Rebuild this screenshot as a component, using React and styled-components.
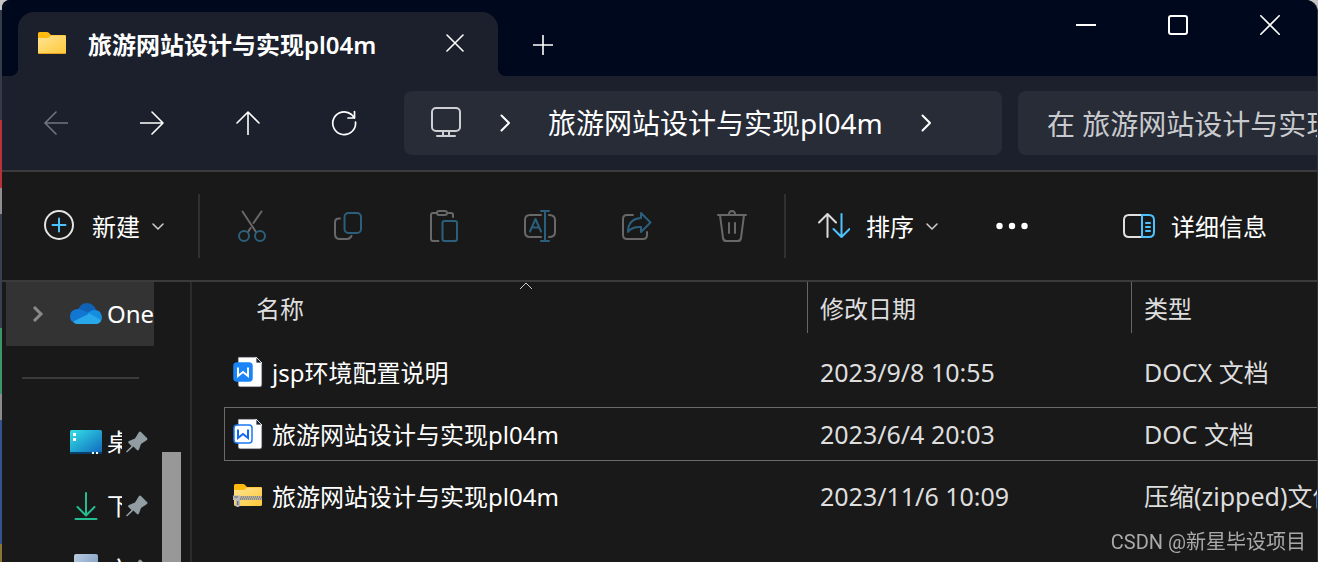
import styled, { createGlobalStyle } from "styled-components";

const GlobalStyle = createGlobalStyle`
  * {
    box-sizing: border-box;
  }

  body {
    margin: 0;
    overflow: hidden;
    background: #191919;
    font-family: "Noto Sans", "Noto Sans CJK SC", sans-serif;
    color: #fff;
  }

  button {
    font: inherit;
    color: inherit;
    background: none;
    border: none;
    padding: 0;
    margin: 0;
  }
`;

const PROJECT = "旅游网站设计与实现pl04m";

const files = [
  { name: "jsp环境配置说明", date: "2023/9/8 10:55", type: "DOCX 文档", icon: "docx" },
  { name: PROJECT, date: "2023/6/4 20:03", type: "DOC 文档", icon: "doc", focused: true },
  { name: PROJECT, date: "2023/11/6 10:09", type: "压缩(zipped)文件夹", icon: "zip" },
];

/* ---------- icons ---------- */

function Icon({ size = 32, color = "#fff", width = 2, children }) {
  return (
    <svg
      width={size}
      height={size}
      viewBox={`0 0 ${size} ${size}`}
      fill="none"
      stroke={color}
      strokeWidth={width}
      strokeLinecap="round"
      strokeLinejoin="round"
      aria-hidden="true"
    >
      {children}
    </svg>
  );
}

const GRAY = "#686868";
const BLUE = "#2b5f7c";
const ACCENT = "#4cc2ff";

const BackIcon = () => (
  <Icon size={24} color="#70747c" width={1.6}>
    <path d="M23.5 12H1M12 1 1 12l11 11" />
  </Icon>
);

const ForwardIcon = () => (
  <Icon size={24} width={1.6}>
    <path d="M.5 12H23M12 1l11 11-11 11" />
  </Icon>
);

const UpIcon = () => (
  <Icon size={24} width={1.6}>
    <path d="M12 23.5V1M1 12 12 1l11 11" />
  </Icon>
);

const RefreshIcon = () => (
  <Icon size={26} width={1.7}>
    <path d="M24.5 12A11.4 11.4 0 1 1 20.5 4.5L23.5 8M23.5 1.5V8H17" />
  </Icon>
);

const MonitorIcon = () => (
  <Icon size={32} color="#cdcfd2">
    <rect x="2" y="1" width="28" height="23" rx="4" />
    <path d="M13 24v4M19 24v4M7 29h18" />
  </Icon>
);

const CrumbChevron = () => (
  <Icon size={18}>
    <path d="M5.5 1.5 13 9l-7.5 7.5" />
  </Icon>
);

const SmallChevron = () => (
  <Icon size={12} color="#d0d0d0" width={1.5}>
    <path d="M1 4l5 5 5-5" />
  </Icon>
);

const FolderIcon = () => (
  <svg width="28" height="22" viewBox="0 0 28 22" aria-hidden="true">
    <defs>
      <linearGradient id="folder" x1="0" y1="0" x2="1" y2="1">
        <stop offset="0" stopColor="#ffe394" />
        <stop offset="1" stopColor="#ffc938" />
      </linearGradient>
    </defs>
    <path d="M0 1.5Q0 0 1.5 0H9q1 0 1.8.8L13 3h13.5Q28 3 28 4.5V12H0z" fill="#ffb90f" />
    <path d="M0 6h9.5q1 0 1.8-.8L13 3.500h15V20.5q0 1.500-1.500 1.500h-25Q0 22 0 20.5z" fill="url(#folder)" />
    <path d="M.5 21.5h27" stroke="#e5a21a" strokeWidth="1" />
  </svg>
);

const ZipIcon = () => (
  <svg width="30" height="24" viewBox="0 0 30 24" aria-hidden="true">
    <path d="M1 1.5Q1 0 2.5 0H10q1 0 1.8.8L14 3h13.5Q29 3 29 4.5V12H1z" fill="#ffb90f" />
    <path d="M1 6h9.5q1 0 1.8-.8L14 3.500h15V20.5q0 1.500-1.500 1.500h-25Q1 22 1 20.5z" fill="url(#folder)" />
    <path d="M7 14h22" stroke="#8a8272" strokeWidth="4" />
    <path d="M7 13h22M8 15h21" stroke="#e0ddd4" strokeWidth="1.2" strokeDasharray="1.2 .8" />
    <path d="M0 11.5h7V22q-2.500 2-4.500 0v-6H0z" fill="#b9b9b9" />
    <path d="M4.7 17v4M1 13h4" stroke="#686868" strokeWidth="1.2" />
  </svg>
);

const NewIcon = () => (
  <Icon color="#e4e4e4">
    <circle cx="15" cy="15" r="14" />
    <path d="M15 8.5v13M8.5 15h13" stroke={ACCENT} />
  </Icon>
);

const CutIcon = () => (
  <Icon color={GRAY}>
    <path d="M6.5 1.5 20 22M25.5 1.5 17.5 13M14.5 18 12 22" />
    <circle cx="8" cy="26" r="5" stroke={BLUE} />
    <circle cx="24" cy="26" r="5" stroke={BLUE} />
  </Icon>
);

const CopyIcon = () => (
  <Icon color={GRAY}>
    <path d="M8 8.500h-1Q3 8.500 3 12.500V24q0 5 5 5h7q3 0 4.500-3" />
    <rect x="12.5" y="3" width="16.5" height="20" rx="4" stroke={BLUE} />
  </Icon>
);

const PasteIcon = () => (
  <Icon color={GRAY}>
    <path d="M10.5 31H5q-2 0-2-2V5q0-2 2-2h4M19 3h4q2 0 2 2v2" />
    <rect x="9" y="1" width="10" height="4" rx="2" />
    <rect x="14.5" y="11" width="14.5" height="20" rx="2" stroke={BLUE} />
  </Icon>
);

const RenameIcon = () => (
  <Icon color={GRAY}>
    <path d="M17 5H6Q1 5 1 10v12q0 5 5 5h11M25 5q6 0 6 5v12q0 5-6 5" />
    <path d="M6 21.5 11.5 9 17 21.5M8 17.5h7M21 1v30M17 1h8M17 31h8" stroke={BLUE} />
  </Icon>
);

const ShareIcon = () => (
  <Icon color={GRAY}>
    <path d="M13 5H7Q3 5 3 9V25q0 4 4 4h16q4 0 4-4v-3" />
    <path d="M21 3l9.5 9.500L21 22v-5q-9-.5-13 5Q8 9 21 8z" stroke={BLUE} />
  </Icon>
);

const DeleteIcon = () => (
  <Icon color={GRAY}>
    <path d="M2 5h28M4 5l3 23q.4 3 3.400 3h11.200q3 0 3.400-3L28 5M12.5 4.500q1-3.500 3.500-3.500t3.500 3.500M13 13v10M19 13v10" />
  </Icon>
);

const SortIcon = () => (
  <Icon color="#dcdcdc">
    <path d="M9.5 27V4M1 12.500 9.5 4l8.5 8.500" />
    <path d="M23.500 4v23M15.500 19l8 8 8-8" stroke={ACCENT} />
  </Icon>
);

const MoreIcon = () => (
  <svg width="32" height="32" viewBox="0 0 32 32" fill="#fff" aria-hidden="true">
    <circle cx="3.5" cy="16" r="3.2" />
    <circle cx="16" cy="16" r="3.2" />
    <circle cx="28.5" cy="16" r="3.2" />
  </svg>
);

const DetailsIcon = () => (
  <Icon color="#e0e0e0">
    <path d="M18 5H6Q1 5 1 10v12q0 5 5 5h12" />
    <path d="M19 5h7q5 0 5 5v12q0 5-5 5h-7zM23 13h4M23 17h4M23 21h4" stroke={ACCENT} />
  </Icon>
);

const OneDriveIcon = () => (
  <svg width="32" height="22" viewBox="0 0 32 22" aria-hidden="true">
    <path d="M7 9Q10 0 17 0q6 0 9.500 7L18 13z" fill="#0f62b5" />
    <path d="M7 20Q0 20 0 13.500 0 6.500 7.500 6q3 0 6 1.500L23 13 9 20z" fill="#1277d3" />
    <path d="M17 10 23 7q8-1 9 7 0 6-6 7z" fill="#168ee0" />
    <path d="M3 18.500 19.500 10.500 31 17q-1 4-5.500 4H7q-2.500 0-4-2.500z" fill="#28a8ea" />
  </svg>
);

const DesktopIcon = () => (
  <svg width="32" height="24" viewBox="0 0 32 24" aria-hidden="true">
    <defs>
      <linearGradient id="desktop" x1="0" y1="0" x2="1" y2="1">
        <stop offset="0" stopColor="#35e0e6" />
        <stop offset="1" stopColor="#0f66bd" />
      </linearGradient>
    </defs>
    <rect width="32" height="24" rx="1.5" fill="url(#desktop)" />
    <path d="M0 22h32v.5q0 1.500-1.500 1.500h-29Q0 24 0 22.500z" fill="#0b3f6b" />
    <path d="M3 3h3v3H3zM3 8h3v3H3zM22 22h2v2h-2zM26 22h2v2h-2z" fill="#fff" />
  </svg>
);

const DownloadIcon = () => (
  <Icon color="#24bd92">
    <path d="M16 3v22M7.500 17l8.500 8.500 8.500-8.500M5.500 29h21" />
  </Icon>
);

const DocumentIcon = () => (
  <svg width="32" height="32" viewBox="0 0 32 32" aria-hidden="true">
    <defs>
      <linearGradient id="document" x1="0" y1="0" x2="1" y2="1">
        <stop offset="0" stopColor="#b9cbe0" />
        <stop offset="1" stopColor="#6f8fb8" />
      </linearGradient>
    </defs>
    <rect x="4" width="24" height="32" rx="2" fill="url(#document)" />
  </svg>
);

const PinIcon = () => (
  <svg width="22" height="22" viewBox="0 0 22 22" fill="#929da3" aria-hidden="true">
    <path d="M13 1q1-1 2 0l6 6q1 1 0 2l-6 4-2 5.500q-1 1.500-2 .5l-3.500-3.500L1 21.500l-1-1L5.500 15 2.500 12q-1-1 .5-2L9 7.500z" />
  </svg>
);

const WpsIcon = ({ outlined }) => (
  <svg width="30" height="32" viewBox="0 0 30 32" fill="none" aria-hidden="true">
    <path d="M5 1h18l6 6v22q0 2-2 2H7q-2 0-2-2z" fill="#fff" stroke="#2b3140" strokeWidth=".8" />
    <path d="M23 1v6h6z" fill="#1a2233" stroke="#fff" strokeWidth=".8" />
    <rect
      x="1"
      y="7"
      width="18"
      height="18"
      rx="3"
      fill={outlined ? "#fff" : "#1a84f8"}
      stroke={outlined ? "#1b78f2" : "#1a84f8"}
      strokeWidth="1.5"
    />
    <path d="M5 11.500v8.500l5-4 5 4v-8.500" stroke={outlined ? "#1368f0" : "#fff"} strokeWidth="2" />
  </svg>
);

const fileIcons = {
  docx: <WpsIcon />,
  doc: <WpsIcon outlined />,
  zip: <ZipIcon />,
};

/* ---------- page ---------- */

function TitleBar() {
  return (
    <TitleRow>
      <Tab>
        <FolderIcon />
        <TabTitle>{PROJECT}</TabTitle>
        <TabButton aria-label="关闭标签页">
          <Icon size={18} width={1.6}>
            <path d="M1 1l16 16M17 1 1 17" />
          </Icon>
        </TabButton>
      </Tab>
      <NewTabButton aria-label="新标签页">
        <Icon size={20} width={1.6}>
          <path d="M10 .5v19M.5 10h19" />
        </Icon>
      </NewTabButton>
      <WindowButtons>
        <WindowButton aria-label="最小化">
          <Icon size={20}>
            <path d="M0 10h20" />
          </Icon>
        </WindowButton>
        <WindowButton aria-label="最大化">
          <Icon size={20}>
            <rect x="1" y="1" width="18" height="18" rx="2" />
          </Icon>
        </WindowButton>
        <WindowButton aria-label="关闭">
          <Icon size={20} width={1.6}>
            <path d="M.8.8l18.400 18.400M19.200.8.8 19.200" />
          </Icon>
        </WindowButton>
      </WindowButtons>
    </TitleRow>
  );
}

function NavBar() {
  return (
    <NavRow>
      <NavButtons>
        <IconButton aria-label="后退" disabled>
          <BackIcon />
        </IconButton>
        <IconButton aria-label="前进">
          <ForwardIcon />
        </IconButton>
        <IconButton aria-label="向上">
          <UpIcon />
        </IconButton>
        <IconButton aria-label="刷新">
          <RefreshIcon />
        </IconButton>
      </NavButtons>
      <AddressBar>
        <MonitorIcon />
        <CrumbChevron />
        <Crumb>{PROJECT}</Crumb>
        <CrumbChevron />
      </AddressBar>
      <SearchBox type="text" aria-label="搜索" placeholder={`在 ${PROJECT} 中搜索`} />
    </NavRow>
  );
}

function Toolbar() {
  return (
    <ToolRow>
      <ToolButton>
        <NewIcon />
        <ToolLabel>新建</ToolLabel>
        <Chevron>
          <SmallChevron />
        </Chevron>
      </ToolButton>
      <ToolDivider />
      <IconButton aria-label="剪切" disabled>
        <CutIcon />
      </IconButton>
      <IconButton aria-label="复制" disabled>
        <CopyIcon />
      </IconButton>
      <IconButton aria-label="粘贴" disabled>
        <PasteIcon />
      </IconButton>
      <IconButton aria-label="重命名" disabled>
        <RenameIcon />
      </IconButton>
      <IconButton aria-label="共享" disabled>
        <ShareIcon />
      </IconButton>
      <IconButton aria-label="删除" disabled>
        <DeleteIcon />
      </IconButton>
      <ToolDivider />
      <ToolButton>
        <SortIcon />
        <ToolLabel>排序</ToolLabel>
        <Chevron>
          <SmallChevron />
        </Chevron>
      </ToolButton>
      <MoreButton aria-label="更多">
        <MoreIcon />
      </MoreButton>
      <ToolButton $end>
        <DetailsIcon />
        <ToolLabel>详细信息</ToolLabel>
      </ToolButton>
    </ToolRow>
  );
}

function Sidebar() {
  return (
    <SidePanel>
      <SideList>
        <SideItem $active>
          <Expander>
            <Icon size={16} color="#8a8a8a" width={3}>
              <path d="M4 1 11 8l-7 7" strokeLinecap="butt" strokeLinejoin="miter" />
            </Icon>
          </Expander>
          <OneDriveIcon />
          <SideLabel>OneDrive</SideLabel>
        </SideItem>
        <SideDivider />
        <SideItem>
          <Expander />
          <DesktopIcon />
          <SideLabel>桌面</SideLabel>
          <PinIcon />
        </SideItem>
        <SideItem>
          <Expander />
          <DownloadIcon />
          <SideLabel>下载</SideLabel>
          <PinIcon />
        </SideItem>
        <SideItem>
          <Expander />
          <DocumentIcon />
          <SideLabel>文档</SideLabel>
          <PinIcon />
        </SideItem>
      </SideList>
      <ScrollThumb />
    </SidePanel>
  );
}

function FileList() {
  return (
    <Table>
      <Head>
        <HeadRow>
          <HeadCell>
            名称
            <SortMark>
              <svg width="14" height="8" viewBox="0 0 14 8" fill="none" stroke="#cfcfcf" aria-hidden="true">
                <path d="M1 7l6-6 6 6" />
              </svg>
            </SortMark>
          </HeadCell>
          <HeadCell>修改日期</HeadCell>
          <HeadCell>类型</HeadCell>
        </HeadRow>
      </Head>
      <Body>
        {files.map((file) => (
          <FileRow key={file.date} $focused={file.focused}>
            <NameCell>
              {fileIcons[file.icon]}
              <FileName>{file.name}</FileName>
            </NameCell>
            <InfoCell>{file.date}</InfoCell>
            <InfoCell>{file.type}</InfoCell>
          </FileRow>
        ))}
      </Body>
    </Table>
  );
}

export default function App() {
  return (
    <Desktop>
      <GlobalStyle />
      <Window>
        <TitleBar />
        <NavBar />
        <Toolbar />
        <Content>
          <Sidebar />
          <FileList />
        </Content>
      </Window>
      <Watermark>CSDN @新星毕设项目</Watermark>
    </Desktop>
  );
}

const Desktop = styled.div`
  height: 100vh;
  padding-left: 2px;
  background: linear-gradient(
    #c4c4c4 0 10px,
    #343a48 10px 120px,
    #b8323c 120px 188px,
    #8d8d92 188px 214px,
    #37404f 214px 328px,
    #3f9468 328px 394px,
    #8b8b8b 394px 420px,
    #34538f 420px 544px,
    #8a7434 544px
  );
`;

const Window = styled.div`
  display: flex;
  flex-direction: column;
  height: 100%;
  overflow: hidden;
  background: #191919;
  border-right: 1px solid #30333c;
  border-radius: 8px 12px 0 0;
`;

const TitleRow = styled.header`
  display: flex;
  align-items: flex-start;
  flex: none;
  height: 76px;
  padding: 0 1px 0 16px;
  background: #00081d;
`;

const Tab = styled.div`
  position: relative;
  display: flex;
  align-items: center;
  width: 480px;
  height: 64px;
  margin-top: 12px;
  padding: 0 31px 2px 20px;
  background: #1b202c;
  border-radius: 16px 16px 0 0;

  &::before,
  &::after {
    content: "";
    position: absolute;
    bottom: 0;
    width: 8px;
    height: 8px;
  }

  &::before {
    right: 100%;
    background: radial-gradient(circle at 0 0, transparent 8px, #1b202c 8px);
  }

  &::after {
    left: 100%;
    background: radial-gradient(circle at 100% 0, transparent 8px, #1b202c 8px);
  }
`;

const TabTitle = styled.span`
  flex: 1;
  margin-left: 22px;
  padding-top: 4px;
  font-size: 24px;
  font-weight: 600;
  line-height: 32px;
  white-space: nowrap;
`;

const TabButton = styled.button`
  display: flex;
  align-items: center;
  justify-content: center;
  width: 24px;
  height: 32px;
`;

const NewTabButton = styled(TabButton)`
  width: 90px;
  height: 64px;
  margin-top: 13px;
`;

const WindowButtons = styled.div`
  display: flex;
  margin-left: auto;
`;

const WindowButton = styled.button`
  display: flex;
  align-items: center;
  justify-content: center;
  width: 92px;
  height: 50px;
`;

const NavRow = styled.nav`
  display: flex;
  align-items: center;
  flex: none;
  height: 94px;
  padding-left: 6px;
  background: #1b202c;
`;

const NavButtons = styled.div`
  display: flex;
  margin-right: 12px;
`;

const IconButton = styled.button`
  display: flex;
  align-items: center;
  justify-content: center;
  flex: none;
  width: 96px;
  height: 64px;
`;

const MoreButton = styled(IconButton)`
  width: 88px;
`;

const AddressBar = styled.div`
  display: flex;
  align-items: center;
  flex: 1;
  gap: 34px;
  height: 64px;
  padding-left: 26px;
  background: #272c37;
  border-radius: 8px;
`;

const Crumb = styled.button`
  font-size: 28px;
  line-height: 40px;
  white-space: nowrap;
`;

const SearchBox = styled.input`
  width: 299px;
  height: 64px;
  margin-left: 16px;
  padding: 2px 0 0 29px;
  font: inherit;
  font-size: 28px;
  color: #fff;
  background: #272c37;
  border: none;
  border-radius: 8px 0 0 8px;
  outline: none;

  &::placeholder {
    color: #c9cacd;
    opacity: 1;
  }
`;

const ToolRow = styled.div`
  display: flex;
  align-items: center;
  flex: none;
  height: 112px;
  padding: 0 20px 0 14px;
  border-top: 2px solid #3b3b3b;
  border-bottom: 2px solid #3b3b3b;
`;

const ToolButton = styled.button`
  display: flex;
  align-items: center;
  gap: 16px;
  height: 64px;
  padding: 0 30px 0 28px;
  margin-left: ${({ $end }) => ($end ? "auto" : "0")};
`;

const ToolLabel = styled.span`
  padding-top: 2px;
  font-size: 24px;
  line-height: 32px;
  white-space: nowrap;
`;

const Chevron = styled.span`
  display: flex;
  margin-left: -4px;
`;

const ToolDivider = styled.span`
  flex: none;
  width: 2px;
  height: 64px;
  margin: 0 4px;
  background: #303030;
`;

const Content = styled.div`
  display: flex;
  flex: 1;
  min-height: 0;
  overflow: hidden;
`;

const SidePanel = styled.aside`
  display: flex;
  flex: none;
  gap: 8px;
  width: 190px;
  padding-left: 4px;
  border-right: 2px solid #2b2b2b;
`;

const SideList = styled.div`
  width: 148px;
`;

const SideItem = styled.button`
  display: flex;
  align-items: center;
  width: 100%;
  height: 64px;
  padding-right: ${({ $active }) => ($active ? "0" : "6px")};
  background: ${({ $active }) => ($active ? "#333" : "none")};

  svg {
    flex: none;
  }
`;

const Expander = styled.span`
  display: flex;
  justify-content: center;
  flex: none;
  width: 64px;
`;

const SideLabel = styled.span`
  flex: 1;
  min-width: 0;
  margin: 0 4px 0 5px;
  overflow: hidden;
  font-size: 24px;
  line-height: 32px;
  text-align: left;
  white-space: nowrap;

  &:last-child {
    margin-right: 0;
  }
`;

const SideDivider = styled.hr`
  height: 2px;
  margin: 31px 15px 31px 16px;
  background: #3b3b3b;
  border: none;
`;

const ScrollThumb = styled.div`
  width: 19px;
  margin-top: 170px;
  background: #989898;
`;

const Table = styled.table`
  display: block;
  flex: 1;
  min-width: 0;
  padding-left: 32px;
  font-size: 24px;
  line-height: 32px;
  white-space: nowrap;
`;

const Head = styled.thead`
  display: block;
`;

const HeadRow = styled.tr`
  display: grid;
  grid-template-columns: 564px 324px 1fr;
  padding-left: 20px;
`;

const HeadCell = styled.th`
  position: relative;
  height: 51px;
  padding: 11px 12px 0;
  font-weight: 400;
  text-align: left;
  color: #dedede;
  border-right: 1px solid #666;

  &:last-child {
    border-right: none;
  }
`;

const SortMark = styled.span`
  position: absolute;
  top: 0;
  left: 50%;
  display: flex;
  transform: translateX(-50%);
`;

const Body = styled.tbody`
  display: flex;
  flex-direction: column;
  gap: 8px;
  margin-top: 12px;
`;

const FileRow = styled.tr`
  display: grid;
  grid-template-columns: 583px 324px 1fr;
  align-items: center;
  height: 54px;
  border: 1px solid ${({ $focused }) => ($focused ? "#6b6b6b" : "transparent")};
  border-right: none;
`;

const NameCell = styled.td`
  display: flex;
  align-items: center;
  gap: 9px;
  padding: 0 8px;

  svg {
    flex: none;
  }
`;

const FileName = styled.span`
  padding-top: 2px;
`;

const InfoCell = styled.td`
  min-width: 0;
  padding: 0 0 0 12px;
  overflow: hidden;
  font-size: 25px;
  color: #dedede;
`;

const Watermark = styled.div`
  position: fixed;
  right: 12px;
  bottom: 8px;
  font-family: Roboto, "Noto Sans CJK SC", sans-serif;
  font-size: 20px;
  line-height: 24px;
  color: #a9a9a9;
`;
